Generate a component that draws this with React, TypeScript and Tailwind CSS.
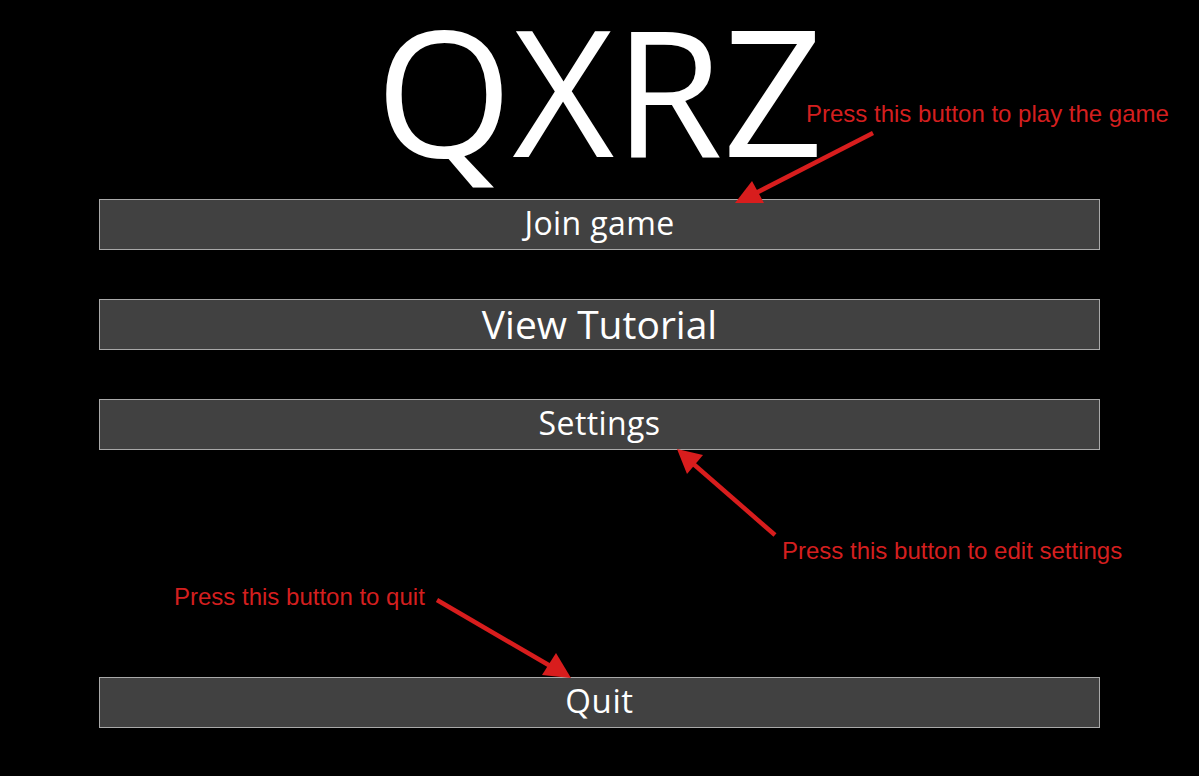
import React from "react";

const btn =
  "mx-[99px] h-[51px] bg-[#414141] border border-[#a9a9a9] flex items-center justify-center text-white font-['Open_Sans',sans-serif]";

const note =
  "absolute text-[#d41f1f] text-[24px] leading-none whitespace-nowrap font-['Liberation_Sans',Arial,sans-serif]";

export default function App() {
  return (
    <div className="relative w-[1199px] h-[776px] bg-black overflow-hidden">
      <div className="flex flex-col">
        <div className="h-[199px] flex justify-center items-start pt-[1px] text-white text-[176px] leading-[176px] font-['Open_Sans',sans-serif]">
          <span>QXRZ</span>
        </div>
        <div className="flex flex-col gap-[49px]">
          <div className={btn + " text-[32px] tracking-[0.4px] pb-[4px]"}>Join game</div>
          <div className={btn + " text-[39px]"}>View Tutorial</div>
          <div className={btn + " text-[32px] tracking-[0.4px] pb-[4px]"}>Settings</div>
        </div>
        <div className="h-[227px]" />
        <div className={btn + " text-[33px] tracking-[0.6px] pb-[4px]"}>Quit</div>
      </div>

      <div className={note + " left-[806px] top-[102px]"}>Press this button to play the game</div>
      <div className={note + " left-[782px] top-[539px]"}>Press this button to edit settings</div>
      <div className={note + " left-[174px] top-[585px]"}>Press this button to quit</div>

      <svg className="absolute inset-0 pointer-events-none" width="1199" height="776">
        <g stroke="#d81d1d" strokeWidth="4.5" strokeLinecap="butt">
          <line x1="873" y1="133" x2="752" y2="195" />
          <line x1="775" y1="535" x2="690" y2="461" />
          <line x1="437" y1="600" x2="552" y2="667" />
        </g>
        <g fill="#d81d1d">
          <polygon points="735,203 752,181 764,203" />
          <polygon points="677,449 687,474 703,455" />
          <polygon points="571,678 542,675 556,653" />
        </g>
      </svg>
    </div>
  );
}
